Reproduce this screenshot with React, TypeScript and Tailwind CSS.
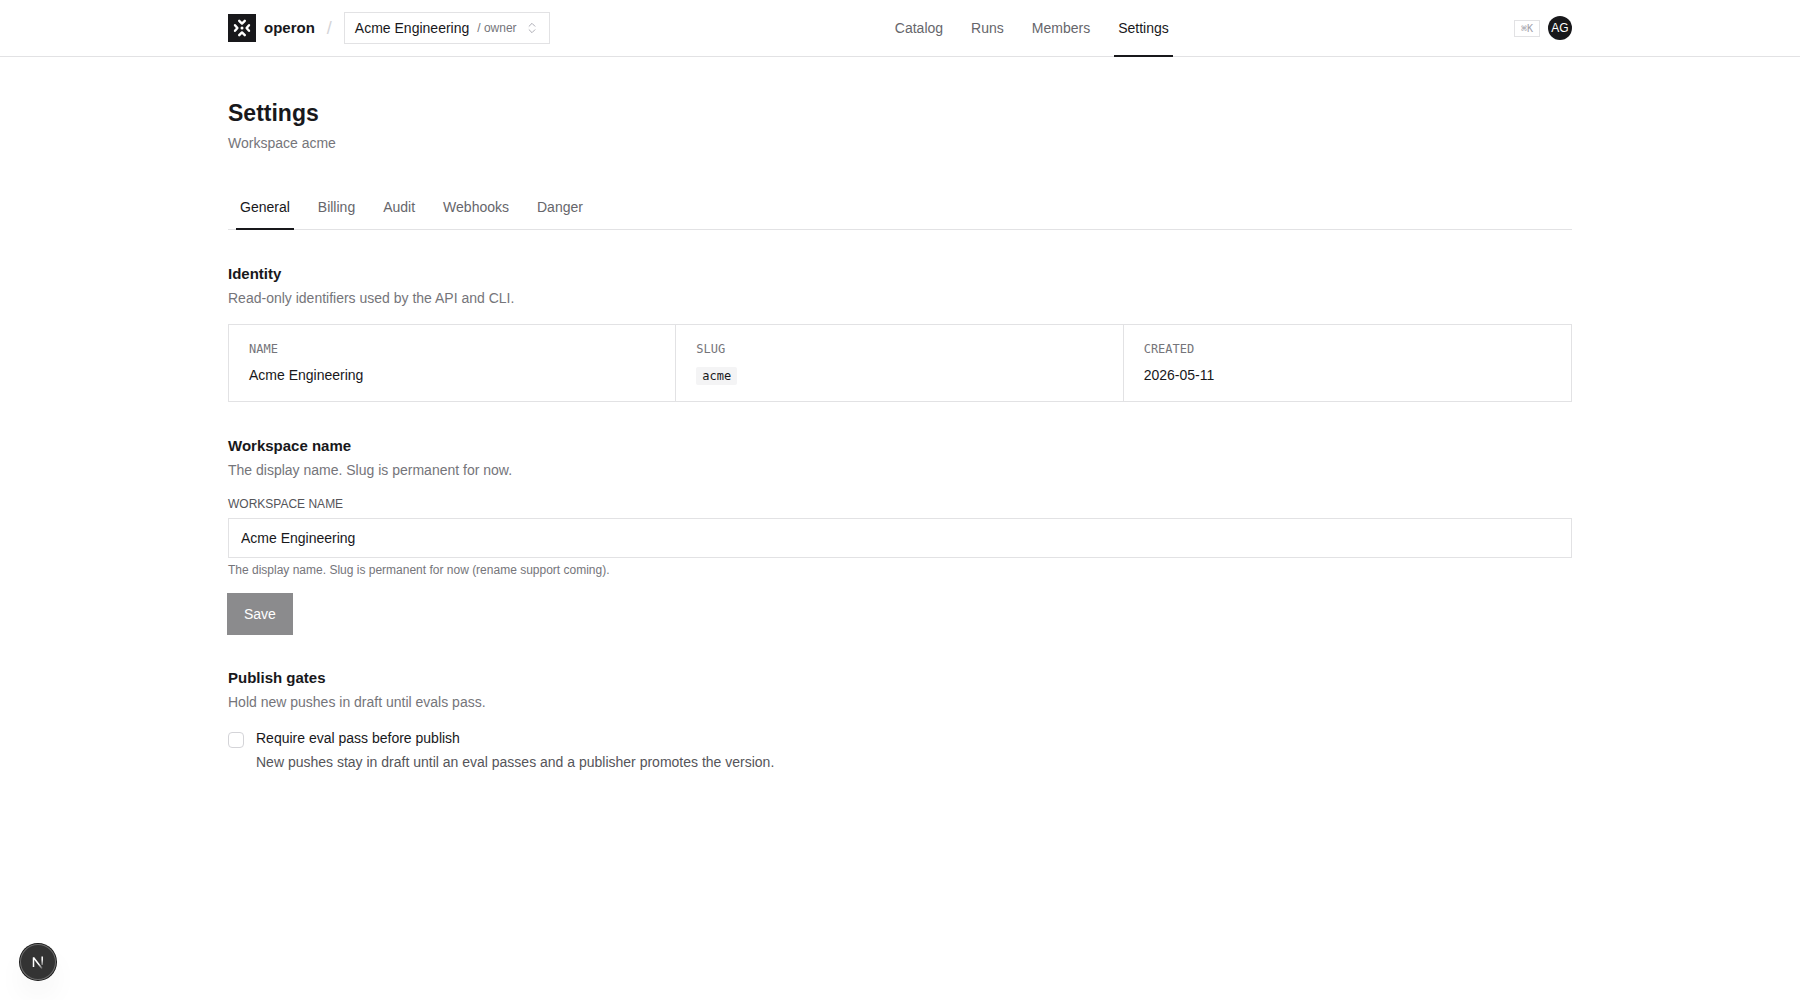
import { ChevronsUpDown } from "lucide-react";
import clsx from "clsx";
import { useState } from "react";

const NAV = ["Catalog", "Runs", "Members", "Settings"];
const TABS = ["General", "Billing", "Audit", "Webhooks", "Danger"];

function Logo() {
  return (
    <svg viewBox="0 0 28 28" className="size-7" aria-hidden="true">
      <rect width="28" height="28" fill="#18181b" />
      <g fill="none" stroke="#fff" strokeWidth="2.4" strokeLinecap="round" strokeLinejoin="round">
        <path d="M11.2 6.8 14 9.6 16.8 6.8" />
        <path d="M11.2 21.2 14 18.4 16.8 21.2" />
        <path d="M7 11.2 9.4 14 7 16.8" />
        <path d="M21 11.2 18.6 14 21 16.8" />
      </g>
      <circle cx="14" cy="14" r="1.5" fill="#fff" />
    </svg>
  );
}

function TabLink({ label, active, className }: { label: string; active: boolean; className?: string }) {
  return (
    <a
      href={"#" + label.toLowerCase()}
      aria-current={active ? "page" : undefined}
      className={clsx("relative flex items-center px-3", active ? "text-[#18181b]" : "text-[#66666b]", className)}
    >
      {label}
      {active && <span className="absolute inset-x-2 -bottom-px h-0.5 bg-[#18181b]" />}
    </a>
  );
}

function SectionHeading({ title, description }: { title: string; description: string }) {
  return (
    <div className="flex flex-col gap-0.5">
      <h2 className="text-[15px] leading-6 font-bold">{title}</h2>
      <p className="text-[#75757a]">{description}</p>
    </div>
  );
}

function IdentityCell({ label, children }: { label: string; children: React.ReactNode }) {
  return (
    <div className="flex flex-col gap-2 px-5 py-4">
      <dt className="font-['DejaVu_Sans_Mono',monospace] text-xs text-[#75757a] uppercase">{label}</dt>
      <dd className="leading-5">{children}</dd>
    </div>
  );
}

export default function App() {
  const [name, setName] = useState("Acme Engineering");
  const [gated, setGated] = useState(false);

  return (
    <div className="min-h-screen bg-white font-['Liberation_Sans',Arial,sans-serif] text-sm text-[#18181b]">
      <header className="border-b border-[#e2e2e4]">
        <div className="mx-auto flex h-14 max-w-[1440px] items-center justify-between px-12">
          <div className="flex items-center gap-3">
            <a href="#home" className="flex items-center gap-2 text-[15px] font-bold">
              <Logo />
              operon
            </a>
            <span className="text-lg text-[#d4d4d8]">/</span>
            <button type="button" className="flex h-8 items-center gap-2 border border-[#e2e2e4] px-2.5">
              Acme Engineering
              <span className="text-xs text-[#75757a]">/ owner</span>
              <ChevronsUpDown className="size-3.5 text-[#a1a1aa]" strokeWidth={1.5} />
            </button>
          </div>

          <nav className="flex gap-1 self-stretch">
            {NAV.map((item) => (
              <TabLink key={item} label={item} active={item === "Settings"} />
            ))}
          </nav>

          <div className="flex items-center gap-2">
            <kbd className="border border-[#e2e2e4] px-1.5 font-['DejaVu_Sans_Mono',monospace] text-[10px] leading-[15px] text-[#a1a1aa]">
              ⌘K
            </kbd>
            <button type="button" className="flex size-6 items-center justify-center rounded-full bg-[#18181b] text-xs text-white">
              AG
            </button>
          </div>
        </div>
      </header>

      <main className="mx-auto flex max-w-[1440px] flex-col gap-8 px-12 pt-10 pb-16">
        <div className="flex flex-col gap-1">
          <h1 className="text-[23px] leading-8 font-bold">Settings</h1>
          <p className="text-[#75757a]">Workspace acme</p>
        </div>

        <nav className="flex gap-1 border-b border-[#e2e2e4]">
          {TABS.map((tab) => (
            <TabLink key={tab} label={tab} active={tab === "General"} className="h-11" />
          ))}
        </nav>

        <section className="flex flex-col gap-4">
          <SectionHeading title="Identity" description="Read-only identifiers used by the API and CLI." />
          <dl className="grid grid-cols-3 divide-x divide-[#e2e2e4] border border-[#e2e2e4]">
            <IdentityCell label="Name">Acme Engineering</IdentityCell>
            <IdentityCell label="Slug">
              <code className="rounded-xs bg-[#f4f4f5] px-1.5 py-0.5 font-['DejaVu_Sans_Mono',monospace] text-xs">acme</code>
            </IdentityCell>
            <IdentityCell label="Created">2026-05-11</IdentityCell>
          </dl>
        </section>

        <section className="flex flex-col gap-3.5">
          <SectionHeading title="Workspace name" description="The display name. Slug is permanent for now." />
          <form className="flex flex-col items-start gap-4" onSubmit={(e) => e.preventDefault()}>
            <div className="flex w-full flex-col gap-1">
              <label htmlFor="workspace-name" className="text-xs leading-5 text-[#55555a] uppercase">
                Workspace name
              </label>
              <input
                id="workspace-name"
                value={name}
                onChange={(e) => setName(e.target.value)}
                className="h-10 w-full border border-[#e2e2e4] px-3 outline-none"
              />
              <p className="text-xs text-[#75757a]">The display name. Slug is permanent for now (rename support coming).</p>
            </div>
            <button type="submit" className="h-10 bg-[#8b8b8d] px-4 text-white ring-1 ring-[#8b8b8d]">
              Save
            </button>
          </form>
        </section>

        <section className="flex flex-col gap-4">
          <SectionHeading title="Publish gates" description="Hold new pushes in draft until evals pass." />
          <div className="flex items-start gap-3">
            <input
              id="require-eval"
              type="checkbox"
              checked={gated}
              onChange={(e) => setGated(e.target.checked)}
              aria-describedby="require-eval-hint"
              className="mt-1 size-4 appearance-none rounded border border-[#d4d4d8] checked:bg-[#18181b]"
            />
            <div className="flex flex-col gap-1">
              <label htmlFor="require-eval">Require eval pass before publish</label>
              <p id="require-eval-hint" className="text-[#55555a]">
                New pushes stay in draft until an eval passes and a publisher promotes the version.
              </p>
            </div>
          </div>
        </section>
      </main>

      <button
        type="button"
        aria-label="Open dev tools"
        className="fixed bottom-5 left-5 flex size-9 items-center justify-center rounded-full bg-[#333] shadow-[0_16px_32px_-8px_rgba(0,0,0,0.14)] ring-1 ring-[#171717] inset-ring inset-ring-[#6b6b6b]"
      >
        <svg viewBox="0 0 14 14" className="size-3.5" fill="none" strokeWidth="1.5" aria-hidden="true">
          <defs>
            <linearGradient id="fade" x1="0" y1="1" x2="0" y2="13" gradientUnits="userSpaceOnUse">
              <stop offset="0.3" stopColor="#fff" />
              <stop offset="1" stopColor="#fff" stopOpacity="0" />
            </linearGradient>
            <linearGradient id="fade-diagonal" x1="8" y1="9" x2="11" y2="13.5" gradientUnits="userSpaceOnUse">
              <stop stopColor="#fff" />
              <stop offset="1" stopColor="#fff" stopOpacity="0.2" />
            </linearGradient>
          </defs>
          <path d="M2.5 12V2.5L11 13.5" stroke="url(#fade-diagonal)" strokeLinejoin="bevel" />
          <path d="M11.2 1.5V10" stroke="url(#fade)" />
        </svg>
      </button>
    </div>
  );
}
